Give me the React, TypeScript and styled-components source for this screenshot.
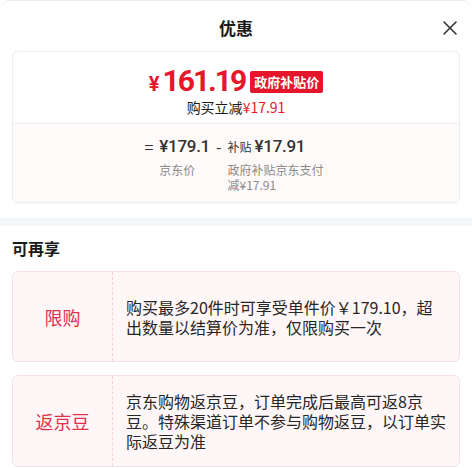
import React from "react";
import styled, { createGlobalStyle } from "styled-components";

const Global = createGlobalStyle`
  html, body { margin: 0; padding: 0; background: #fff; }
  body { font-family: "Noto Sans CJK SC", "Noto Sans", sans-serif; color: #1a1a1a; }
  * { box-sizing: border-box; }
`;

const Sheet = styled.div`
  width: 472px;
  height: 468px;
  overflow: hidden;
  background: #fff;
  border-top: 1px solid #ececec;
  border-radius: 10px 10px 0 0;
`;

const Header = styled.div`
  height: 50px;
  padding-top: 3px;
  display: grid;
  grid-template-columns: 1fr auto 1fr;
  align-items: center;
`;

const Title = styled.div`
  grid-column: 2;
  font-size: 17px;
  font-weight: 700;
  line-height: 22px;
  color: #1a1a1a;
`;

const Close = styled.button`
  justify-self: end;
  margin-right: 14px;
  width: 16px;
  height: 16px;
  padding: 0;
  border: 0;
  background: none;
  display: flex;
`;

const PriceCard = styled.div`
  margin: 0 12px;
  border: 1px solid #ececec;
  border-radius: 6px;
  overflow: hidden;
  box-shadow: 0 1px 2px rgba(0, 0, 0, 0.03);
`;

const Top = styled.div`
  padding: 14px 0 7px;
  display: flex;
  flex-direction: column;
  align-items: center;
  border-bottom: 1px solid #f6eeee;
`;

const PriceRow = styled.div`
  height: 32px;
  display: flex;
  align-items: center;
  gap: 5px;
`;

const Price = styled.div`
  color: #e6162b;
  font-family: "Roboto", sans-serif;
  font-weight: 700;
  font-size: 30px;
  letter-spacing: -2px;
  line-height: 32px;
  display: flex;
  align-items: baseline;
`;

const Yen = styled.span`
  font-size: 20px;
  letter-spacing: 0;
  margin-right: 3px;
`;

const Badge = styled.span`
  background: #e5162b;
  color: #fff;
  font-size: 13px;
  font-weight: 700;
  line-height: 22px;
  height: 22px;
  padding: 0 4px;
  border-radius: 2px;
`;

const SubLine = styled.div`
  font-size: 14px;
  line-height: 18px;
  color: #1a1a1a;
`;

const Red = styled.span`
  color: #e6162b;
`;

const Bottom = styled.div`
  background: #fffafa;
  padding: 10px 0 10px;
  display: flex;
  justify-content: center;
`;

const Formula = styled.div`
  display: grid;
  grid-template-columns: auto auto auto 100px;
  column-gap: 6px;
  row-gap: 3px;
`;

const Op = styled.div`
  font-size: 16px;
  line-height: 24px;
  color: #333;
`;

const Amount = styled.div`
  font-family: "Roboto", sans-serif;
  font-size: 17px;
  font-weight: 500;
  letter-spacing: -0.3px;
  line-height: 24px;
  color: #333;
  white-space: nowrap;
  display: flex;
  align-items: baseline;
`;

const SmallTag = styled.span`
  font-family: "Noto Sans CJK SC", sans-serif;
  font-size: 12px;
  font-weight: 400;
  letter-spacing: 0;
  margin-right: 3px;
  color: #333;
`;

const Label = styled.div<{ $col: number }>`
  grid-column: ${(p) => p.$col};
  font-size: 12px;
  line-height: 15px;
  color: #8a8a8a;
`;

const Band = styled.div`
  height: 8px;
  margin-top: 15px;
  background: #f4f7fa;
`;

const SectionTitle = styled.div`
  margin: 11px 0 12px 12px;
  font-size: 16px;
  font-weight: 700;
  line-height: 22px;
  color: #1a1a1a;
`;

const List = styled.div`
  display: flex;
  flex-direction: column;
  gap: 13px;
  margin: 0 12px;
`;

const Promo = styled.div`
  display: grid;
  grid-template-columns: 99px 1fr;
  min-height: 91px;
  background: #fff6f7;
  border: 1px solid #f6e1e4;
  border-radius: 6px;
`;

const PromoTag = styled.div`
  display: flex;
  align-items: center;
  justify-content: center;
  font-size: 18px;
  color: #e0304b;
`;

const PromoText = styled.div`
  border-left: 1px dashed #f0d2d7;
  padding: 15px 11px 15px 13px;
  display: flex;
  align-items: center;
  font-size: 16px;
  line-height: 20px;
  color: #262626;
`;

const promos = [
  { tag: "限购", text: "购买最多20件时可享受单件价￥179.10，超出数量以结算价为准，仅限购买一次" },
  { tag: "返京豆", text: "京东购物返京豆，订单完成后最高可返8京豆。特殊渠道订单不参与购物返豆，以订单实际返豆为准" },
];

export default function App() {
  return (
    <>
      <Global />
      <Sheet>
        <Header>
          <Title>优惠</Title>
          <Close aria-label="关闭">
            <svg width="16" height="16" viewBox="0 0 16 16">
              <path d="M2 2 L14 14 M14 2 L2 14" stroke="#333" strokeWidth="1.6" strokeLinecap="round" />
            </svg>
          </Close>
        </Header>
        <PriceCard>
          <Top>
            <PriceRow>
              <Price>
                <Yen>¥</Yen>161.19
              </Price>
              <Badge>政府补贴价</Badge>
            </PriceRow>
            <SubLine>
              购买立减<Red>¥17.91</Red>
            </SubLine>
          </Top>
          <Bottom>
            <Formula>
              <Op>=</Op>
              <Amount>¥179.1</Amount>
              <Op>-</Op>
              <Amount>
                <SmallTag>补贴</SmallTag>¥17.91
              </Amount>
              <Label $col={2}>京东价</Label>
              <Label $col={4}>政府补贴京东支付减¥17.91</Label>
            </Formula>
          </Bottom>
        </PriceCard>
        <Band />
        <SectionTitle>可再享</SectionTitle>
        <List>
          {promos.map((p) => (
            <Promo key={p.tag}>
              <PromoTag>{p.tag}</PromoTag>
              <PromoText>{p.text}</PromoText>
            </Promo>
          ))}
        </List>
      </Sheet>
    </>
  );
}
